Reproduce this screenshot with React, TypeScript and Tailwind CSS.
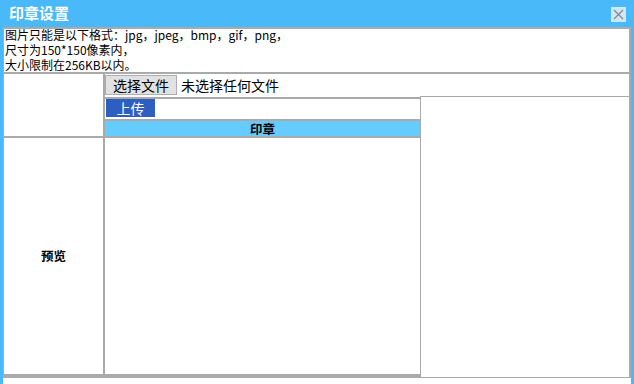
export default function App() {
  return (
    <div className="w-[634px] h-[384px] bg-[#4ab9f9] flex flex-col overflow-hidden font-['Noto_Sans_CJK_SC','Noto_Sans',sans-serif] text-black">
      <div className="h-[27px] flex items-start justify-between pl-[9px] pr-[8px]">
        <span className="text-white font-bold text-[15px] leading-[26px]">印章设置</span>
        <div className="mt-[7px] w-[15px] h-[15px] bg-[#cfe8f8] flex items-center justify-center">
          <svg width="15" height="15" viewBox="0 0 15 15">
            <path d="M3 3 L12 12 M12 3 L3 12" stroke="#8a8a8a" strokeWidth="1.3" fill="none" />
          </svg>
        </div>
      </div>
      <div className="ml-[3px] w-[628px] flex-1 bg-white">
        <div className="border-t-2 border-l border-r-2 border-[#aaaaaa] flex flex-col">
          <div className="h-[45px] pl-[1px] text-[12px] border-b-2 border-[#aaaaaa]">
            <div className="relative -top-[2px] flex flex-col">
              <div className="h-[15px] leading-[15px]">图片只能是以下格式：jpg，jpeg，bmp，gif，png，</div>
              <div className="h-[15px] leading-[15px]">尺寸为150*150像素内，</div>
              <div className="h-[15px] leading-[15px]">大小限制在256KB以内。</div>
            </div>
          </div>
          <div className="flex h-[304px]">
            <div className="w-[101px] border-r-2 border-[#aaaaaa] flex flex-col">
              <div className="h-[62px]" />
              <div className="h-[2px] bg-[#aaaaaa]" />
              <div className="h-[236px] flex items-center justify-center text-[12.5px] font-bold">预览</div>
              <div className="h-[4px] bg-[#aaaaaa]" />
            </div>
            <div className="w-[524px] flex flex-col">
              <div className="h-[22px] flex items-start">
                <div className="mt-[1px] h-[20px] w-[72px] border border-[#adadad] bg-[#e1e1e1] text-[14px] leading-[18px] flex items-center justify-center">选择文件</div>
                <span className="ml-[4px] text-[14px] leading-[22px]">未选择任何文件</span>
              </div>
              <div className="flex h-[282px]">
                <div className="w-[315px] flex flex-col">
                  <div className="h-[1px]" />
                  <div className="h-[2px] bg-[#aaaaaa]" />
                  <div className="h-[20px] pl-[1px]">
                    <div className="h-[18px] w-[49px] bg-[#2e5ebf] text-white text-[14px] leading-[18px] flex items-center justify-center">上传</div>
                  </div>
                  <div className="h-[2px] bg-[#aaaaaa]" />
                  <div className="h-[15px] bg-[#66ccff] text-[12.5px] font-bold leading-[15px] text-center">印章</div>
                  <div className="h-[2px] bg-[#aaaaaa]" />
                  <div className="h-[236px]" />
                  <div className="h-[4px] bg-[#aaaaaa]" />
                </div>
                <div className="flex-1 border-t border-l border-b border-[#aaaaaa]" />
              </div>
            </div>
          </div>
        </div>
      </div>
    </div>
  );
}
